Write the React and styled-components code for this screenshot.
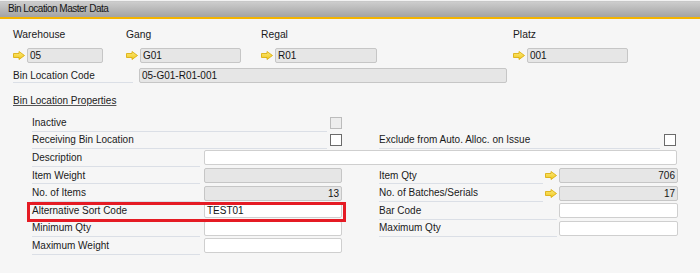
import React from "react";
import styled, { createGlobalStyle, css } from "styled-components";

const Global = createGlobalStyle`
  html, body { margin: 0; padding: 0; }
  body {
    background: #f6f6f6;
    font-family: "Liberation Sans", Arial, sans-serif;
    font-size: 10px;
    color: #1a1a1a;
  }
`;

const Window = styled.div`
  width: 700px;
  height: 273px;
  overflow: hidden;
  background: #f6f6f6;
`;

const TitleBar = styled.div`
  height: 19px;
  box-sizing: border-box;
  padding-left: 8px;
  display: flex;
  align-items: center;
  background: linear-gradient(#d2d2d2 0%, #bdbdbd 45%, #a3a3a3 100%);
  box-shadow: inset 0 1px 0 #f2f2f2, inset 0 2px 0 #c8c8c8;
  border-bottom: 2px solid #f4b400;
  font-size: 10px;
  letter-spacing: -0.5px;
  color: #151515;
`;

const Content = styled.div`
  padding: 9px 0 0 13px;
`;

const HeaderGrid = styled.div`
  display: grid;
  grid-template-columns: 113px 135px 252px 1fr;
`;

const HeaderCell = styled.div`
  display: flex;
  flex-direction: column;
  gap: 6px;
`;

const HeaderLabel = styled.div`
  line-height: 14px;
  height: 14px;
  font-size: 10.3px;
`;

const Linked = styled.div`
  display: flex;
  align-items: center;
`;

const ArrowSlot = styled.span`
  width: 14px;
  flex: none;
  display: flex;
  align-items: center;
`;

const Field = styled.div`
  box-sizing: border-box;
  height: 15px;
  width: ${(p) => (p.$w ? `${p.$w}px` : "auto")};
  border: 1px solid ${(p) => (p.$white ? "#cfcfcf" : "#c6c6c6")};
  border-radius: 2px;
  background: ${(p) => (p.$white ? "#ffffff" : "#e6e6e6")};
  padding: 0 2px;
  line-height: 13px;
  text-align: ${(p) => (p.$right ? "right" : "left")};
  color: #151515;
  white-space: nowrap;
  overflow: hidden;
  align-self: center;
  ${(p) =>
    p.$span &&
    css`
      grid-column: ${p.$span};
    `}
`;

const CodeRow = styled.div`
  display: flex;
  align-items: center;
  margin-top: 5px;
  height: 15px;
`;

const Label = styled.div`
  box-sizing: border-box;
  height: 100%;
  display: flex;
  align-items: center;
  border-bottom: 1px solid #dbdfe6;
  margin-right: ${(p) => p.$mr ?? 4}px;
  white-space: nowrap;
  width: ${(p) => (p.$w ? `${p.$w}px` : "auto")};
  flex: ${(p) => (p.$grow ? 1 : "none")};
  ${(p) =>
    p.$span &&
    css`
      grid-column: ${p.$span};
    `}
`;

const SectionTitle = styled.div`
  margin-top: 11px;
  line-height: 14px;
  text-decoration: underline;
  text-decoration-color: #555;
  text-underline-offset: 1px;
`;

const PropGrid = styled.div`
  margin: 6px 0 0 19px;
  display: grid;
  grid-template-columns: 172px 138px 37px 166px 14px 119px;
  grid-auto-rows: 17.6px;
`;

const CheckCell = styled.div`
  display: flex;
  align-items: center;
  grid-column: ${(p) => p.$span};
  height: 100%;
  padding-right: ${(p) => p.$pr ?? 0}px;
`;

const Checkbox = styled.span`
  box-sizing: border-box;
  width: 12px;
  height: 12px;
  flex: none;
  border: 1px solid ${(p) => (p.$disabled ? "#bcbcbc" : "#6b6b6b")};
  background: ${(p) => (p.$disabled ? "#ededed" : "#ffffff")};
`;

const Arrow = () => (
  <svg width="12" height="9" viewBox="0 0 12 9">
    <defs>
      <linearGradient id="ag" x1="0" y1="0" x2="0" y2="1">
        <stop offset="0" stopColor="#fbe97a" />
        <stop offset="1" stopColor="#f1c81e" />
      </linearGradient>
    </defs>
    <path
      d="M0.5 2.5 H6 V0.5 L11.5 4.5 L6 8.5 V6.5 H0.5 Z"
      fill="url(#ag)"
      stroke="#d9a900"
      strokeWidth="0.8"
      strokeLinejoin="round"
    />
  </svg>
);

const ArrowCell = styled.div`
  display: flex;
  align-items: center;
  height: 100%;
`;

const Highlight = styled.div`
  grid-column: 1 / 3;
  display: grid;
  grid-template-columns: 172px 138px;
  position: relative;
  &::after {
    content: "";
    position: absolute;
    top: 0;
    bottom: -2px;
    left: -5px;
    right: -4px;
    border: 3px solid #e51b24;
    pointer-events: none;
  }
`;

const headers = [
  { label: "Warehouse", value: "05", w: 76 },
  { label: "Gang", value: "G01", w: 101 },
  { label: "Regal", value: "R01", w: 102 },
  { label: "Platz", value: "001", w: 101 },
];

export default function App() {
  return (
    <Window>
      <Global />
      <TitleBar>Bin Location Master Data</TitleBar>
      <Content>
        <HeaderGrid>
          {headers.map((h) => (
            <HeaderCell key={h.label}>
              <HeaderLabel>{h.label}</HeaderLabel>
              <Linked>
                <ArrowSlot>
                  <Arrow />
                </ArrowSlot>
                <Field $w={h.w}>{h.value}</Field>
              </Linked>
            </HeaderCell>
          ))}
        </HeaderGrid>
        <CodeRow>
          <Label $w={120} $mr={6}>Bin Location Code</Label>
          <Field $w={368}>05-G01-R01-001</Field>
        </CodeRow>
        <SectionTitle>Bin Location Properties</SectionTitle>
        <PropGrid>
          <CheckCell $span="1 / 3">
            <Label $grow $mr={3}>Inactive</Label>
            <Checkbox $disabled />
          </CheckCell>

          <CheckCell $span="1 / 3">
            <Label $grow $mr={3}>Receiving Bin Location</Label>
            <Checkbox />
          </CheckCell>
          <CheckCell $span="4 / 7" $pr={2}>
            <Label $grow $mr={4}>Exclude from Auto. Alloc. on Issue</Label>
            <Checkbox />
          </CheckCell>

          <Label $span="1 / 2">Description</Label>
          <Field $white $span="2 / 7" style={{ marginRight: 1 }} />

          <Label $span="1 / 2">Item Weight</Label>
          <Field $span="2 / 3" />
          <Label $span="4 / 5" $mr={2}>Item Qty</Label>
          <ArrowCell>
            <Arrow />
          </ArrowCell>
          <Field $right>706</Field>

          <Label $span="1 / 2">No. of Items</Label>
          <Field $right $span="2 / 3">13</Field>
          <Label $span="4 / 5" $mr={2}>No. of Batches/Serials</Label>
          <ArrowCell>
            <Arrow />
          </ArrowCell>
          <Field $right>17</Field>

          <Highlight>
            <Label>Alternative Sort Code</Label>
            <Field $white>TEST01</Field>
          </Highlight>
          <Label $span="4 / 6" $mr={2}>Bar Code</Label>
          <Field $white />

          <Label $span="1 / 2">Minimum Qty</Label>
          <Field $white $span="2 / 3" />
          <Label $span="4 / 6" $mr={2}>Maximum Qty</Label>
          <Field $white />

          <Label $span="1 / 2">Maximum Weight</Label>
          <Field $white $span="2 / 3" />
        </PropGrid>
      </Content>
    </Window>
  );
}
